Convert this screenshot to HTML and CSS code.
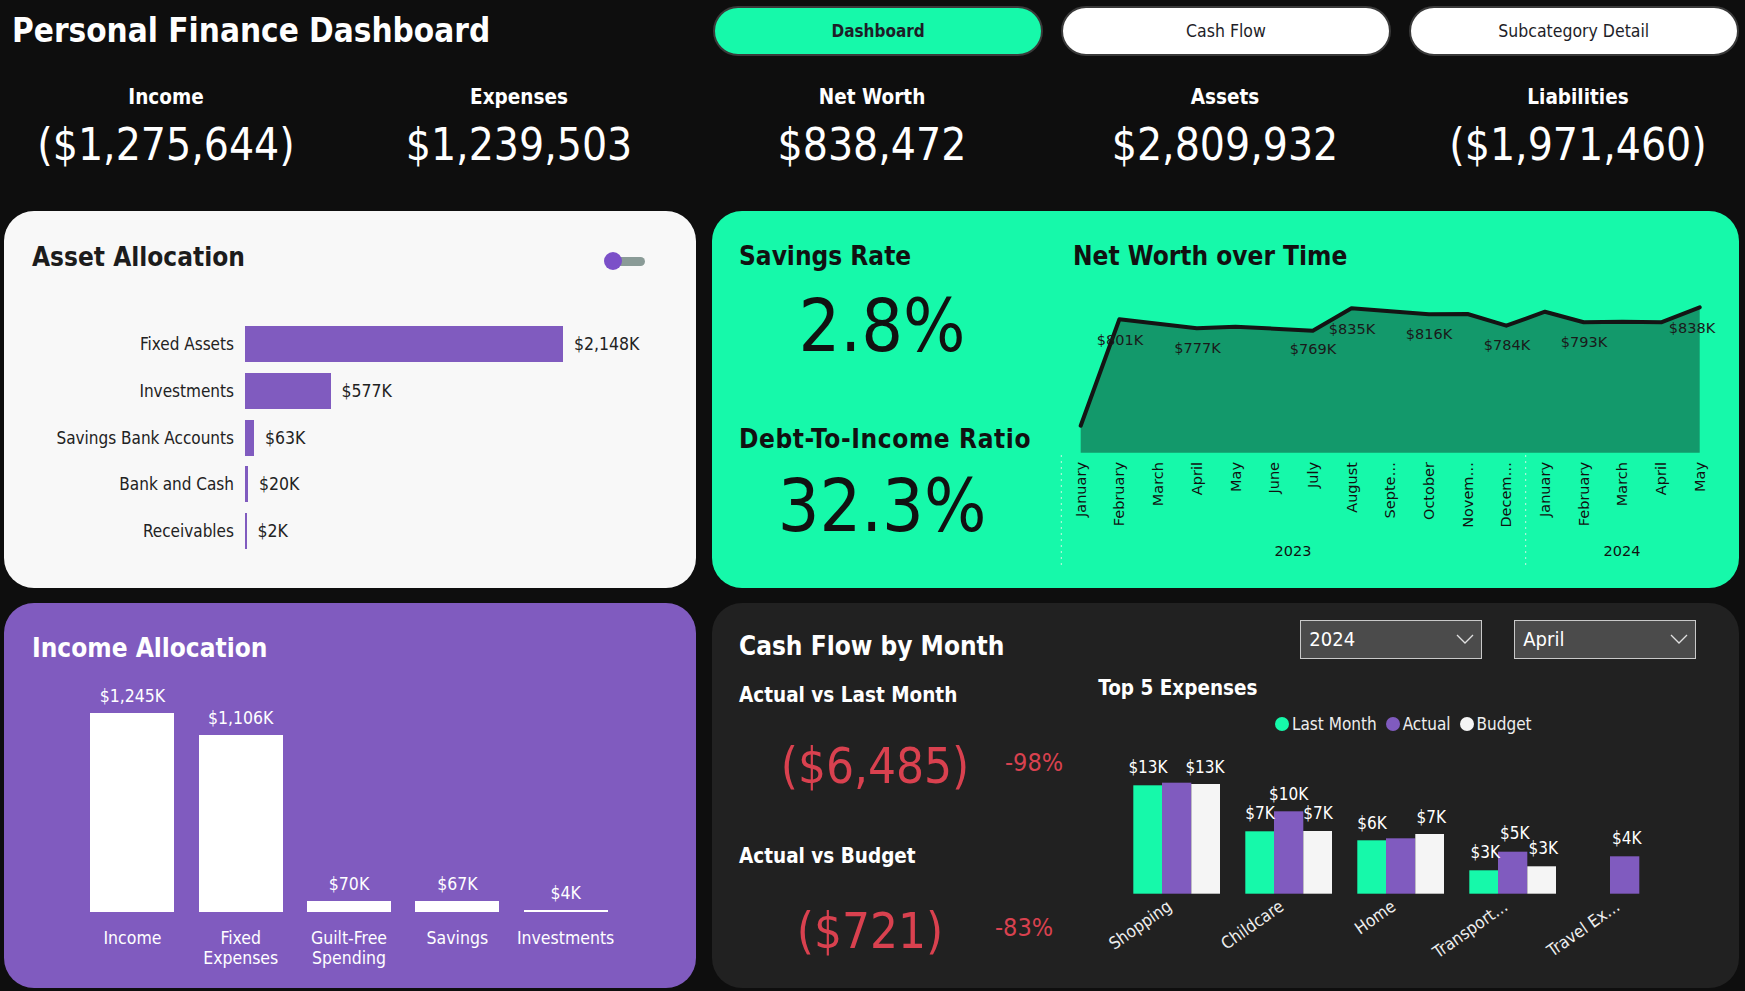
FILE: index.html
```html
<!DOCTYPE html>
<html lang="en">
<head>
<meta charset="utf-8">
<title>Personal Finance Dashboard</title>
<link rel="stylesheet" href="styles.css">
</head>
<body>
<div class="page">
  <header class="topbar">
    <h1 class="title">Personal Finance Dashboard</h1>
    <nav class="tabs">
      <div class="tab tab-active">Dashboard</div>
      <div class="tab">Cash Flow</div>
      <div class="tab">Subcategory Detail</div>
    </nav>
  </header>

  <section class="kpis">
    <div class="kpi"><div class="kpi-label">Income</div><div class="kpi-value">($1,275,644)</div></div>
    <div class="kpi"><div class="kpi-label">Expenses</div><div class="kpi-value">$1,239,503</div></div>
    <div class="kpi"><div class="kpi-label">Net Worth</div><div class="kpi-value">$838,472</div></div>
    <div class="kpi"><div class="kpi-label">Assets</div><div class="kpi-value">$2,809,932</div></div>
    <div class="kpi"><div class="kpi-label">Liabilities</div><div class="kpi-value">($1,971,460)</div></div>
  </section>

  <main class="cards">
    <section class="card card-assets">
      <div class="card-head">
        <h2 class="card-title">Asset Allocation</h2>
        <div class="toggle"><span class="toggle-knob"></span><span class="toggle-track"></span></div>
      </div>
      <div class="hbars">
        <div class="hbar-label">Fixed Assets</div>
        <div class="hbar-cell"><span class="hbar" style="width:318px"></span><span class="hbar-val">$2,148K</span></div>
        <div class="hbar-label">Investments</div>
        <div class="hbar-cell"><span class="hbar" style="width:85.5px"></span><span class="hbar-val">$577K</span></div>
        <div class="hbar-label">Savings Bank Accounts</div>
        <div class="hbar-cell"><span class="hbar" style="width:9px"></span><span class="hbar-val">$63K</span></div>
        <div class="hbar-label">Bank and Cash</div>
        <div class="hbar-cell"><span class="hbar" style="width:3px"></span><span class="hbar-val">$20K</span></div>
        <div class="hbar-label">Receivables</div>
        <div class="hbar-cell"><span class="hbar" style="width:1.5px"></span><span class="hbar-val">$2K</span></div>
      </div>
    </section>

    <section class="card card-green">
      <div class="rates">
        <h2 class="card-title">Savings Rate</h2>
        <div class="rate-value rate-first">2.8%</div>
        <h2 class="card-title rate-title-2">Debt-To-Income Ratio</h2>
        <div class="rate-value rate-second">32.3%</div>
      </div>
      <div class="nw">
        <h2 class="card-title nw-title">Net Worth over Time</h2>
        <svg class="nw-chart" width="684" height="300" viewBox="1055 280 684 300">
          <line class="nw-sep" x1="1063.3" y1="455" x2="1063.3" y2="565"/>
          <line class="nw-sep" x1="1527.7" y1="455" x2="1527.7" y2="565"/>
          <polygon class="nw-area" points="1082.7,425.7 1121.4,319.3 1160.1,323.8 1198.8,328.3 1237.5,326.7 1276.2,328.7 1314.8,330.7 1353.5,308.3 1392.2,311.3 1430.9,314.3 1469.6,314 1508.3,325.7 1547,311.7 1585.7,322.3 1624.4,321.7 1663.1,322.3 1701.7,307.3 1701.7,452.7 1082.7,452.7"/>
          <polyline class="nw-line" points="1082.7,425.7 1121.4,319.3 1160.1,323.8 1198.8,328.3 1237.5,326.7 1276.2,328.7 1314.8,330.7 1353.5,308.3 1392.2,311.3 1430.9,314.3 1469.6,314 1508.3,325.7 1547,311.7 1585.7,322.3 1624.4,321.7 1663.1,322.3 1701.7,307.3"/>
          <g class="nw-labels">
            <text x="1122" y="345">$801K</text>
            <text x="1199.5" y="352.7">$777K</text>
            <text x="1315" y="354.3">$769K</text>
            <text x="1354" y="334">$835K</text>
            <text x="1431" y="339.3">$816K</text>
            <text x="1509" y="350">$784K</text>
            <text x="1586" y="347.3">$793K</text>
            <text x="1694" y="332.7">$838K</text>
          </g>
          <g class="nw-months">
            <text transform="translate(1082.7 462) rotate(-90)">January</text>
            <text transform="translate(1121.4 462) rotate(-90)">February</text>
            <text transform="translate(1160.1 462) rotate(-90)">March</text>
            <text transform="translate(1198.8 462) rotate(-90)">April</text>
            <text transform="translate(1237.5 462) rotate(-90)">May</text>
            <text transform="translate(1276.2 462) rotate(-90)">June</text>
            <text transform="translate(1314.8 462) rotate(-90)">July</text>
            <text transform="translate(1353.5 462) rotate(-90)">August</text>
            <text transform="translate(1392.2 462) rotate(-90)">Septe…</text>
            <text transform="translate(1430.9 462) rotate(-90)">October</text>
            <text transform="translate(1469.6 462) rotate(-90)">Novem…</text>
            <text transform="translate(1508.3 462) rotate(-90)">Decem…</text>
            <text transform="translate(1547 462) rotate(-90)">January</text>
            <text transform="translate(1585.7 462) rotate(-90)">February</text>
            <text transform="translate(1624.4 462) rotate(-90)">March</text>
            <text transform="translate(1663.1 462) rotate(-90)">April</text>
            <text transform="translate(1701.7 462) rotate(-90)">May</text>
          </g>
          <text class="nw-year" x="1295" y="555.5">2023</text>
          <text class="nw-year" x="1624" y="555.5">2024</text>
        </svg>
      </div>
    </section>

    <section class="card card-purple">
      <h2 class="card-title">Income Allocation</h2>
      <div class="vbars">
        <div class="vcol">
          <div class="vplot"><div class="vval">$1,245K</div><div class="vbar" style="height:199px"></div></div>
          <div class="vcat">Income</div>
        </div>
        <div class="vcol">
          <div class="vplot"><div class="vval">$1,106K</div><div class="vbar" style="height:176.7px"></div></div>
          <div class="vcat">Fixed<br>Expenses</div>
        </div>
        <div class="vcol">
          <div class="vplot"><div class="vval">$70K</div><div class="vbar" style="height:11px"></div></div>
          <div class="vcat">Guilt-Free<br>Spending</div>
        </div>
        <div class="vcol">
          <div class="vplot"><div class="vval">$67K</div><div class="vbar" style="height:10.4px"></div></div>
          <div class="vcat">Savings</div>
        </div>
        <div class="vcol">
          <div class="vplot"><div class="vval">$4K</div><div class="vbar" style="height:1.6px"></div></div>
          <div class="vcat">Investments</div>
        </div>
      </div>
    </section>

    <section class="card card-dark">
      <div class="cf-head">
        <h2 class="card-title cf-title">Cash Flow by Month</h2>
        <div class="dropdowns">
          <div class="dd"><span>2024</span><svg class="chev" width="18" height="10" viewBox="0 0 18 10"><polyline points="1,1 9,9 17,1"/></svg></div>
          <div class="dd"><span>April</span><svg class="chev" width="18" height="10" viewBox="0 0 18 10"><polyline points="1,1 9,9 17,1"/></svg></div>
        </div>
      </div>
      <div class="cf-body">
        <div class="cf-left">
          <h3 class="cf-sub">Actual vs Last Month</h3>
          <div class="cf-row">
            <div class="cf-val">($6,485)</div>
            <div class="cf-pct">-98%</div>
          </div>
          <h3 class="cf-sub cf-sub-2">Actual vs Budget</h3>
          <div class="cf-row cf-row-b">
            <div class="cf-val">($721)</div>
            <div class="cf-pct">-83%</div>
          </div>
        </div>
        <div class="cf-right">
          <h3 class="cf-sub">Top 5 Expenses</h3>
          <div class="legend">
            <span class="dot dot-green"></span><span class="legend-txt">Last Month</span>
            <span class="dot dot-purple"></span><span class="legend-txt">Actual</span>
            <span class="dot dot-white"></span><span class="legend-txt">Budget</span>
          </div>
          <svg class="cf-chart" width="597" height="245" viewBox="1098 740 597 245">
            <g class="b-green">
              <rect x="1133.3" y="785.3" width="28.7" height="108.4"/>
              <rect x="1245.3" y="831.3" width="28.7" height="62.4"/>
              <rect x="1357.3" y="840.3" width="28.7" height="53.4"/>
              <rect x="1469.3" y="870.3" width="28.7" height="23.4"/>
            </g>
            <g class="b-purple">
              <rect x="1162" y="782.7" width="29.3" height="111"/>
              <rect x="1274" y="811.3" width="29.3" height="82.4"/>
              <rect x="1386" y="838.3" width="29.3" height="55.4"/>
              <rect x="1498" y="851.7" width="29.3" height="42"/>
              <rect x="1610" y="856.3" width="29.3" height="37.4"/>
            </g>
            <g class="b-white">
              <rect x="1191.3" y="784" width="28.7" height="109.7"/>
              <rect x="1303.3" y="831" width="28.7" height="62.7"/>
              <rect x="1415.3" y="834" width="28.7" height="59.7"/>
              <rect x="1527.3" y="866.3" width="28.7" height="27.4"/>
            </g>
            <g class="cf-vals">
              <text x="1148" y="772.7">$13K</text>
              <text x="1205" y="772.7">$13K</text>
              <text x="1260" y="819.3">$7K</text>
              <text x="1288.7" y="800.3">$10K</text>
              <text x="1318" y="819.3">$7K</text>
              <text x="1372" y="829.3">$6K</text>
              <text x="1431.3" y="822.7">$7K</text>
              <text x="1485.3" y="858.3">$3K</text>
              <text x="1514.7" y="839.3">$5K</text>
              <text x="1543.3" y="854.3">$3K</text>
              <text x="1626.7" y="844.3">$4K</text>
            </g>
            <g class="cf-cats">
              <text transform="translate(1173 909) rotate(-35)">Shopping</text>
              <text transform="translate(1285 909) rotate(-35)">Childcare</text>
              <text transform="translate(1397 909) rotate(-35)">Home</text>
              <text transform="translate(1509 909) rotate(-35)">Transport…</text>
              <text transform="translate(1621 909) rotate(-35)">Travel Ex…</text>
            </g>
          </svg>
        </div>
      </div>
    </section>
  </main>
</div>
</body>
</html>
```

FILE: styles.css
```css
* { box-sizing: border-box; }

html, body {
  margin: 0;
  padding: 0;
  background: #0e0e0e;
}

body {
  width: 1745px;
  height: 991px;
  overflow: hidden;
  font-family: "DejaVu Sans Condensed", "DejaVu Sans", sans-serif;
  font-stretch: condensed;
  color: #ffffff;
}

h1, h2, h3 { margin: 0; font-weight: bold; }

.page { width: 1745px; height: 991px; }

/* ---------- top bar ---------- */
.topbar {
  display: flex;
  justify-content: space-between;
  align-items: flex-start;
  height: 62px;
  padding-right: 6px;
}

.title {
  padding: 11px 0 0 12px;
  font-size: 33px;
  line-height: 40px;
  color: #ffffff;
}

.tabs {
  display: flex;
  gap: 17.3px;
  padding-top: 6px;
}

.tab {
  width: 330.5px;
  height: 50px;
  border: 2px solid #3a3a3a;
  border-radius: 25px;
  background: #ffffff;
  color: #1e1e28;
  font-size: 17.5px;
  display: flex;
  align-items: center;
  justify-content: center;
}

.tab-active {
  background: #16f9aa;
  font-weight: bold;
  font-size: 17px;
}

/* ---------- KPIs ---------- */
.kpis {
  display: grid;
  grid-template-columns: repeat(5, 332px);
  column-gap: 21px;
  padding-top: 23px;
}

.kpi { text-align: center; }

.kpi-label {
  font-size: 20.5px;
  line-height: 24px;
  font-weight: bold;
}

.kpi-value {
  margin-top: 12px;
  font-size: 44px;
  line-height: 48px;
}

/* ---------- cards ---------- */
.cards {
  margin-top: 42px;
  padding-left: 4px;
  display: grid;
  grid-template-columns: 692px 1027px;
  grid-template-rows: 377px 385px;
  column-gap: 16px;
  row-gap: 15px;
}

.card {
  border-radius: 30px;
  overflow: hidden;
}

.card-title {
  font-size: 26px;
  line-height: 28px;
}

/* asset allocation */
.card-assets {
  background: #f8f8f8;
  color: #1c1c1c;
  padding: 32px 51px 0 28px;
}

.card-head {
  display: flex;
  justify-content: space-between;
  align-items: center;
  height: 28px;
}

.toggle {
  display: flex;
  align-items: center;
  margin-top: 8.6px;
}

.toggle-knob {
  position: relative;
  z-index: 1;
  width: 18px;
  height: 18px;
  border-radius: 50%;
  background: #7b50c8;
}

.toggle-track {
  width: 32px;
  height: 9px;
  margin-left: -9px;
  border-radius: 5px;
  background: #8a9b97;
}

.hbars {
  margin-top: 55px;
  display: grid;
  grid-template-columns: 202px 1fr;
  grid-auto-rows: 36px;
  column-gap: 11px;
  row-gap: 10.8px;
}

.hbar-label {
  text-align: right;
  align-self: center;
  font-size: 17px;
  color: #222222;
}

.hbar-cell {
  display: flex;
  align-items: center;
  gap: 11px;
}

.hbar {
  display: block;
  height: 36px;
  background: #805bbf;
}

.hbar-val {
  font-size: 17.5px;
  color: #222222;
}

/* green card */
.card-green {
  background: #16f9aa;
  color: #111111;
  display: flex;
  padding: 31px 0 0 27px;
}

.rates {
  width: 286px;
  flex: none;
  display: flex;
  flex-direction: column;
}

.rate-value {
  text-align: center;
  font-size: 73px;
  line-height: 80px;
}

.rate-first { margin-top: 15.5px; }

.rate-title-2 {
  margin-top: 59.5px;
  letter-spacing: 0.6px;
  white-space: nowrap;
}

.rate-second { margin-top: 13.2px; }

.nw {
  margin-left: 28px;
  width: 684px;
  flex: none;
  display: flex;
  flex-direction: column;
}

.nw-title { padding-left: 20px; }

.nw-chart {
  display: block;
  margin-top: 10px;
}

.nw-area { fill: #13996b; }

.nw-line {
  fill: none;
  stroke: #141414;
  stroke-width: 4;
  stroke-linejoin: round;
  stroke-linecap: round;
}

.nw-sep {
  stroke: #c6f6e0;
  stroke-width: 1;
  stroke-dasharray: 2 4;
}

.nw-labels text {
  font-family: "DejaVu Sans", sans-serif;
  font-stretch: normal;
  font-size: 14.5px;
  fill: #1a1a1a;
  text-anchor: middle;
}

.nw-months text {
  font-family: "DejaVu Sans", sans-serif;
  font-stretch: normal;
  font-size: 14.5px;
  fill: #111111;
  text-anchor: end;
  dominant-baseline: central;
}

.nw-year {
  font-family: "DejaVu Sans", sans-serif;
  font-stretch: normal;
  font-size: 14.5px;
  fill: #111111;
  text-anchor: middle;
}

/* purple card */
.card-purple {
  background: #805bbf;
  color: #ffffff;
  padding: 31px 0 0 28px;
}

.vbars {
  display: flex;
  margin-left: 46.3px;
  margin-top: 10px;
}

.vcol {
  width: 108.3px;
  display: flex;
  flex-direction: column;
  align-items: center;
}

.vplot {
  height: 239.7px;
  display: flex;
  flex-direction: column;
  justify-content: flex-end;
  align-items: center;
}

.vval {
  font-size: 17.5px;
  line-height: 20px;
  margin-bottom: 7px;
}

.vbar {
  width: 84px;
  background: #ffffff;
}

.vcat {
  margin-top: 16.6px;
  font-size: 17.5px;
  line-height: 20px;
  text-align: center;
}

/* dark card */
.card-dark {
  background: #212121;
  color: #ffffff;
  padding: 17px 43px 0 27px;
}

.cf-head {
  display: flex;
  justify-content: space-between;
  align-items: flex-start;
}

.cf-title { margin-top: 11.7px; }

.dropdowns {
  display: flex;
  gap: 32.3px;
}

.dd {
  width: 181.7px;
  height: 38.7px;
  border: 1px solid #c9c9c9;
  background: #4b4b4b;
  display: flex;
  align-items: center;
  justify-content: space-between;
  padding: 0 7px 0 8px;
  font-size: 20px;
  color: #ffffff;
}

.chev polyline {
  fill: none;
  stroke: #e0e0e0;
  stroke-width: 1.3;
}

.cf-body { display: flex; }

.cf-left {
  width: 359.3px;
  flex: none;
  margin-top: 23.1px;
}

.cf-sub {
  font-size: 20.5px;
  line-height: 24px;
  color: #ffffff;
}

.cf-sub-2 { margin-top: 49px; }

.cf-row {
  display: flex;
  align-items: flex-start;
  margin-top: 32.3px;
  color: #d9414f;
}

.cf-row-b { margin-top: 36px; }

.cf-val {
  width: 272px;
  text-align: center;
  font-size: 49px;
  line-height: 56px;
}

.cf-row-b .cf-val { width: 262px; }

.cf-pct {
  width: 44px;
  margin-left: -6px;
  text-align: center;
  font-size: 25px;
  line-height: 30px;
  margin-top: 9px;
  white-space: nowrap;
}

.cf-right {
  flex: 1;
  min-width: 0;
  margin-top: 16.4px;
}

.legend {
  margin-top: 14.2px;
  margin-left: 176.7px;
  display: flex;
  align-items: center;
  height: 20px;
  font-size: 17px;
  color: #eeeeee;
}

.dot {
  width: 14px;
  height: 14px;
  border-radius: 50%;
  margin-right: 3px;
}

.legend-txt { margin-right: 9px; }

.dot-green { background: #16f9aa; }
.dot-purple { background: #805bbf; }
.dot-white { background: #f5f5f5; }

.cf-chart {
  display: block;
  margin-top: 5.7px;
}

.b-green rect { fill: #16f9aa; }
.b-purple rect { fill: #805bbf; }
.b-white rect { fill: #f5f5f5; }

.cf-vals text {
  font-size: 17px;
  fill: #ffffff;
  text-anchor: middle;
}

.cf-cats text {
  font-size: 17px;
  fill: #eeeeee;
  text-anchor: end;
}
```
